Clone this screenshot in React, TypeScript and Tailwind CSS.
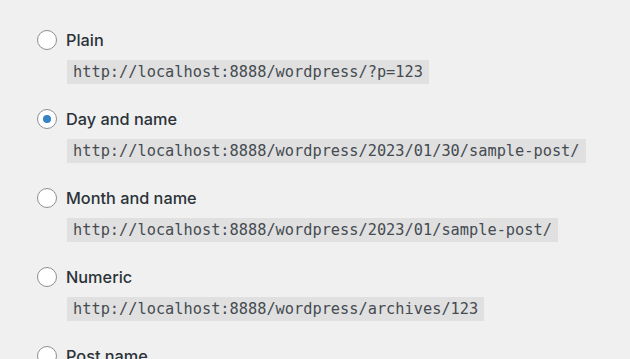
const options = [
  { label: 'Plain', url: 'http://localhost:8888/wordpress/?p=123', checked: false },
  { label: 'Day and name', url: 'http://localhost:8888/wordpress/2023/01/30/sample-post/', checked: true },
  { label: 'Month and name', url: 'http://localhost:8888/wordpress/2023/01/sample-post/', checked: false },
  { label: 'Numeric', url: 'http://localhost:8888/wordpress/archives/123', checked: false },
  { label: 'Post name', url: 'http://localhost:8888/wordpress/sample-post/', checked: false },
];

const Radio = ({ checked }: { checked: boolean }) => (
  <span className="flex h-5 w-5 shrink-0 items-center justify-center rounded-full border border-[#8c8f94] bg-white">
    {checked && <span className="h-2 w-2 rounded-full bg-[#3582c4]" />}
  </span>
);

export default function App() {
  return (
    <div className="h-[359px] w-[630px] overflow-hidden bg-[#f0f0f1] pl-[37px] pt-[30px]">
      {options.map((o) => (
        <div key={o.label} className="mb-[25px]">
          <label className="flex h-5 items-center gap-[9px]">
            <Radio checked={o.checked} />
            <span className="font-['Inter',sans-serif] text-[16.3px] font-medium text-[#2c3338]">{o.label}</span>
          </label>
          <div className="ml-[30px] mt-[9px]">
            <code className="inline-block h-6 bg-[#e0e0e1] px-[6px] font-['DejaVu_Sans_Mono',monospace] text-[15.3px] leading-6 text-[#454b50]">
              {o.url}
            </code>
          </div>
        </div>
      ))}
    </div>
  );
}
